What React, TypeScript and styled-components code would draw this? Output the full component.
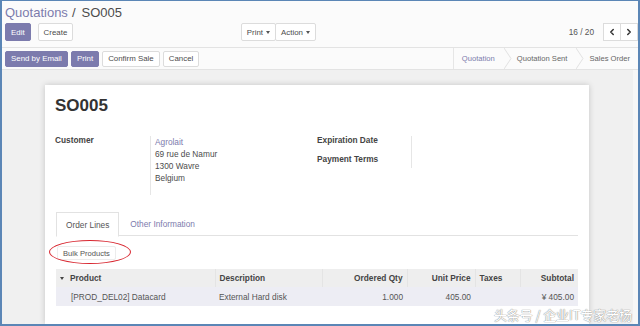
import styled, { createGlobalStyle } from "styled-components"
import { ChevronLeft, ChevronRight } from "lucide-react"

const Global = createGlobalStyle`
  html, body { margin: 0; padding: 0; background: #fff; }
  body {
    font-family: "Liberation Sans", Arial, sans-serif;
    font-size: 8.3px;
    color: #4c4c4c;
  }
  * { box-sizing: border-box; }
`

const purple = "#7c7bad"

const Frame = styled.div`
  width: 640px;
  height: 326px;
  border: 2px solid #5b86b6;
  border-top-width: 1px;
  display: flex;
  flex-direction: column;
  overflow: hidden;
  position: relative;
  background: #f0f0f0;
`

const ControlPanel = styled.div`
  background: #fbfbfb;
  border-bottom: 1px solid #e3e3e3;
  padding: 0 0 6px 3px;
`

const Breadcrumb = styled.div`
  height: 22px;
  display: flex;
  align-items: center;
  gap: 4px;
  font-size: 13px;
  color: #4c4c4c;
`

const Crumb = styled.span`
  color: ${purple};
`

const ButtonRow = styled.div`
  display: grid;
  grid-template-columns: 311px 1fr;
  height: 18px;
`

const Side = styled.div<{ $end?: boolean }>`
  display: flex;
  align-items: center;
  justify-content: ${(p) => (p.$end ? "flex-end" : "space-between")};
  gap: 4px;
`

const Group = styled.div`
  display: flex;
  align-items: center;
  gap: ${(p: { $gap?: number }) => p.$gap ?? 0}px;
`

const Button = styled.button<{ $primary?: boolean; $h?: number }>`
  height: ${(p) => p.$h ?? 18}px;
  padding: 0 5px;
  font-family: inherit;
  font-size: 7.9px;
  border-radius: 2px;
  border: 1px solid ${(p) => (p.$primary ? purple : "#dcdcdc")};
  background: ${(p) => (p.$primary ? purple : "#fff")};
  color: ${(p) => (p.$primary ? "#fff" : "#4c4c4c")};
  display: inline-flex;
  align-items: center;
  gap: 3px;
  cursor: pointer;
  & + & { margin-left: ${(p) => (p.$h ? 3 : 0)}px; }
`

const Caret = styled.span`
  width: 0;
  height: 0;
  border-left: 2.5px solid transparent;
  border-right: 2.5px solid transparent;
  border-top: 3px solid #555;
`

const PagerText = styled.span`
  color: #555;
  margin-right: 5px;
`

const PagerButton = styled.button`
  width: 18px;
  height: 18px;
  padding: 0;
  border: 1px solid #dcdcdc;
  background: #fff;
  display: inline-flex;
  align-items: center;
  justify-content: center;
  color: #333;
  & + & { margin-left: -1px; }
`

const StatusRow = styled.div`
  height: 22px;
  display: flex;
  align-items: center;
  justify-content: space-between;
  background: #fbfbfb;
  border-bottom: 1px solid #e3e3e3;
  padding-left: 3px;
`

const StatusBar = styled.div`
  align-self: stretch;
  display: flex;
  align-items: stretch;
  border-left: 1px solid #e6e6e6;
`

const Stage = styled.div<{ $active?: boolean }>`
  display: flex;
  align-items: center;
  padding: 0 9px 0 5px;
  color: ${(p) => (p.$active ? purple : "#666")};
  font-size: 7.6px;
  &:first-child { padding-left: 8px; }
  &:last-child { padding-right: 8px; }
`

const Content = styled.div`
  flex: 1;
  position: relative;
  padding: 15px 0 0 43px;
  display: flex;
`

const Sheet = styled.div`
  width: 544px;
  background: #fff;
  box-shadow: 0 0 6px rgba(0, 0, 0, 0.18);
  padding: 11px 11px 0 10px;
`

const Title = styled.h1`
  margin: 0;
  font-size: 17px;
  line-height: 20px;
  font-weight: bold;
  color: #333;
`

const Groups = styled.div`
  display: flex;
  margin-top: 15px;
`

const FieldGroup = styled.div<{ $w?: number; $label: number }>`
  width: ${(p) => (p.$w ? `${p.$w}px` : "auto")};
  display: grid;
  grid-template-columns: ${(p) => p.$label}px 1fr;
  align-items: start;
`

const Labels = styled.div`
  line-height: 19px;
  font-weight: bold;
  color: #444;
`

const Values = styled.div<{ $h: number }>`
  margin-top: 5px;
  height: ${(p) => p.$h}px;
  border-left: 1px solid #e6e6e6;
  padding-left: 4px;
  line-height: 12px;
`

const Link = styled.span`
  color: ${purple};
`

const Notebook = styled.div`
  margin: 17px 0 0 1px;
`

const TabNav = styled.div`
  display: flex;
  height: 24px;
  border-bottom: 1px solid #e2e2e2;
`

const Tab = styled.div<{ $active?: boolean }>`
  height: ${(p) => (p.$active ? 25 : 24)}px;
  padding: 0 9px;
  margin-right: 1px;
  display: flex;
  align-items: center;
  color: ${(p) => (p.$active ? "#555" : purple)};
  background: ${(p) => (p.$active ? "#fff" : "transparent")};
  border: 1px solid ${(p) => (p.$active ? "#e2e2e2" : "transparent")};
  border-bottom-color: ${(p) => (p.$active ? "#fff" : "transparent")};
`

const BulkWrap = styled.div`
  position: relative;
  margin-top: 10px;
  width: max-content;
`

const BulkButton = styled.button`
  height: 14px;
  padding: 0 5px;
  margin-left: 1px;
  font-family: inherit;
  font-size: 7.6px;
  color: #555;
  background: #fff;
  border: 1px solid #ececec;
  border-radius: 2px;
`

const Circle = styled.div`
  position: absolute;
  left: -7px;
  top: -6px;
  width: 82px;
  height: 24px;
  border: 1.4px solid #d8262f;
  border-radius: 50%;
`

const Table = styled.table`
  margin-top: 9px;
  width: 522px;
  border-collapse: collapse;
  table-layout: fixed;
`

const Th = styled.th<{ $right?: boolean }>`
  height: 18px;
  background: #eeeeee;
  font-weight: bold;
  color: #444;
  text-align: ${(p) => (p.$right ? "right" : "left")};
  padding: 0 4px;
  border-left: 1px solid #e4e4e4;
  &:first-child { border-left: none; }
`

const Td = styled.td<{ $right?: boolean }>`
  height: 19px;
  background: #ededf4;
  color: #555;
  text-align: ${(p) => (p.$right ? "right" : "left")};
  padding: 0 4px;
`

const SortCaret = styled.span`
  display: inline-block;
  width: 0;
  height: 0;
  border-left: 2.5px solid transparent;
  border-right: 2.5px solid transparent;
  border-top: 3px solid #444;
  margin: 0 6px 1px 0;
`

const Scrollbar = styled.div`
  position: absolute;
  right: 0;
  top: 0;
  bottom: 0;
  width: 5px;
  background: #f7f7f7;
`

const Watermark = styled.div`
  position: absolute;
  right: 6px;
  bottom: 0;
  font-family: "Noto Sans CJK SC", sans-serif;
  font-size: 13px;
  color: #fff;
  letter-spacing: -0.1px;
  text-shadow: 0 0 1px #8a8a8a, 0 0 1px #8a8a8a;
`

const Arrow = () => (
  <svg width="8" height="21" viewBox="0 0 8 21">
    <polyline points="0,0 7,10.5 0,21" fill="none" stroke="#e2e2e2" strokeWidth="1" />
  </svg>
)

export default function App() {
  return (
    <>
      <Global />
      <Frame>
        <ControlPanel>
          <Breadcrumb>
            <Crumb>Quotations</Crumb>
            <span>/</span>
            <span style={{ marginLeft: 2 }}>SO005</span>
          </Breadcrumb>
          <ButtonRow>
            <Side>
              <Group $gap={4}>
                <Button $primary>Edit</Button>
                <Button>Create</Button>
              </Group>
              <Group>
                <Button>Print <Caret /></Button>
                <Button style={{ marginLeft: -1 }}>Action <Caret /></Button>
              </Group>
            </Side>
            <Side $end>
              <PagerText>16 / 20</PagerText>
              <Group>
                <PagerButton><ChevronLeft size={10} strokeWidth={3.5} /></PagerButton>
                <PagerButton><ChevronRight size={10} strokeWidth={3.5} /></PagerButton>
              </Group>
            </Side>
          </ButtonRow>
        </ControlPanel>
        <StatusRow>
          <Group>
            <Button $primary $h={16}>Send by Email</Button>
            <Button $primary $h={16}>Print</Button>
            <Button $h={16}>Confirm Sale</Button>
            <Button $h={16}>Cancel</Button>
          </Group>
          <StatusBar>
            <Stage $active>Quotation</Stage>
            <Arrow />
            <Stage>Quotation Sent</Stage>
            <Arrow />
            <Stage>Sales Order</Stage>
          </StatusBar>
        </StatusRow>
        <Content>
          <Sheet>
            <Title>SO005</Title>
            <Groups>
              <FieldGroup $w={262} $label={95}>
                <Labels>Customer</Labels>
                <Values $h={59}>
                  <Link>Agrolait</Link>
                  <div>69 rue de Namur</div>
                  <div>1300 Wavre</div>
                  <div>Belgium</div>
                </Values>
              </FieldGroup>
              <FieldGroup $label={94}>
                <Labels>
                  <div>Expiration Date</div>
                  <div>Payment Terms</div>
                </Labels>
                <Values $h={32} />
              </FieldGroup>
            </Groups>
            <Notebook>
              <TabNav>
                <Tab $active>Order Lines</Tab>
                <Tab>Other Information</Tab>
              </TabNav>
              <BulkWrap>
                <BulkButton>Bulk Products</BulkButton>
                <Circle />
              </BulkWrap>
              <Table>
                <colgroup>
                  <col style={{ width: 159 }} />
                  <col style={{ width: 107 }} />
                  <col style={{ width: 85 }} />
                  <col style={{ width: 68 }} />
                  <col style={{ width: 45 }} />
                  <col style={{ width: 58 }} />
                </colgroup>
                <thead>
                  <tr>
                    <Th><SortCaret />Product</Th>
                    <Th>Description</Th>
                    <Th $right>Ordered Qty</Th>
                    <Th $right>Unit Price</Th>
                    <Th>Taxes</Th>
                    <Th $right>Subtotal</Th>
                  </tr>
                </thead>
                <tbody>
                  <tr>
                    <Td style={{ paddingLeft: 15 }}>[PROD_DEL02] Datacard</Td>
                    <Td>External Hard disk</Td>
                    <Td $right>1.000</Td>
                    <Td $right>405.00</Td>
                    <Td />
                    <Td $right>¥ 405.00</Td>
                  </tr>
                </tbody>
              </Table>
            </Notebook>
          </Sheet>
          <Scrollbar />
          <Watermark>头条号 / 企业IT专家老杨</Watermark>
        </Content>
      </Frame>
    </>
  )
}
